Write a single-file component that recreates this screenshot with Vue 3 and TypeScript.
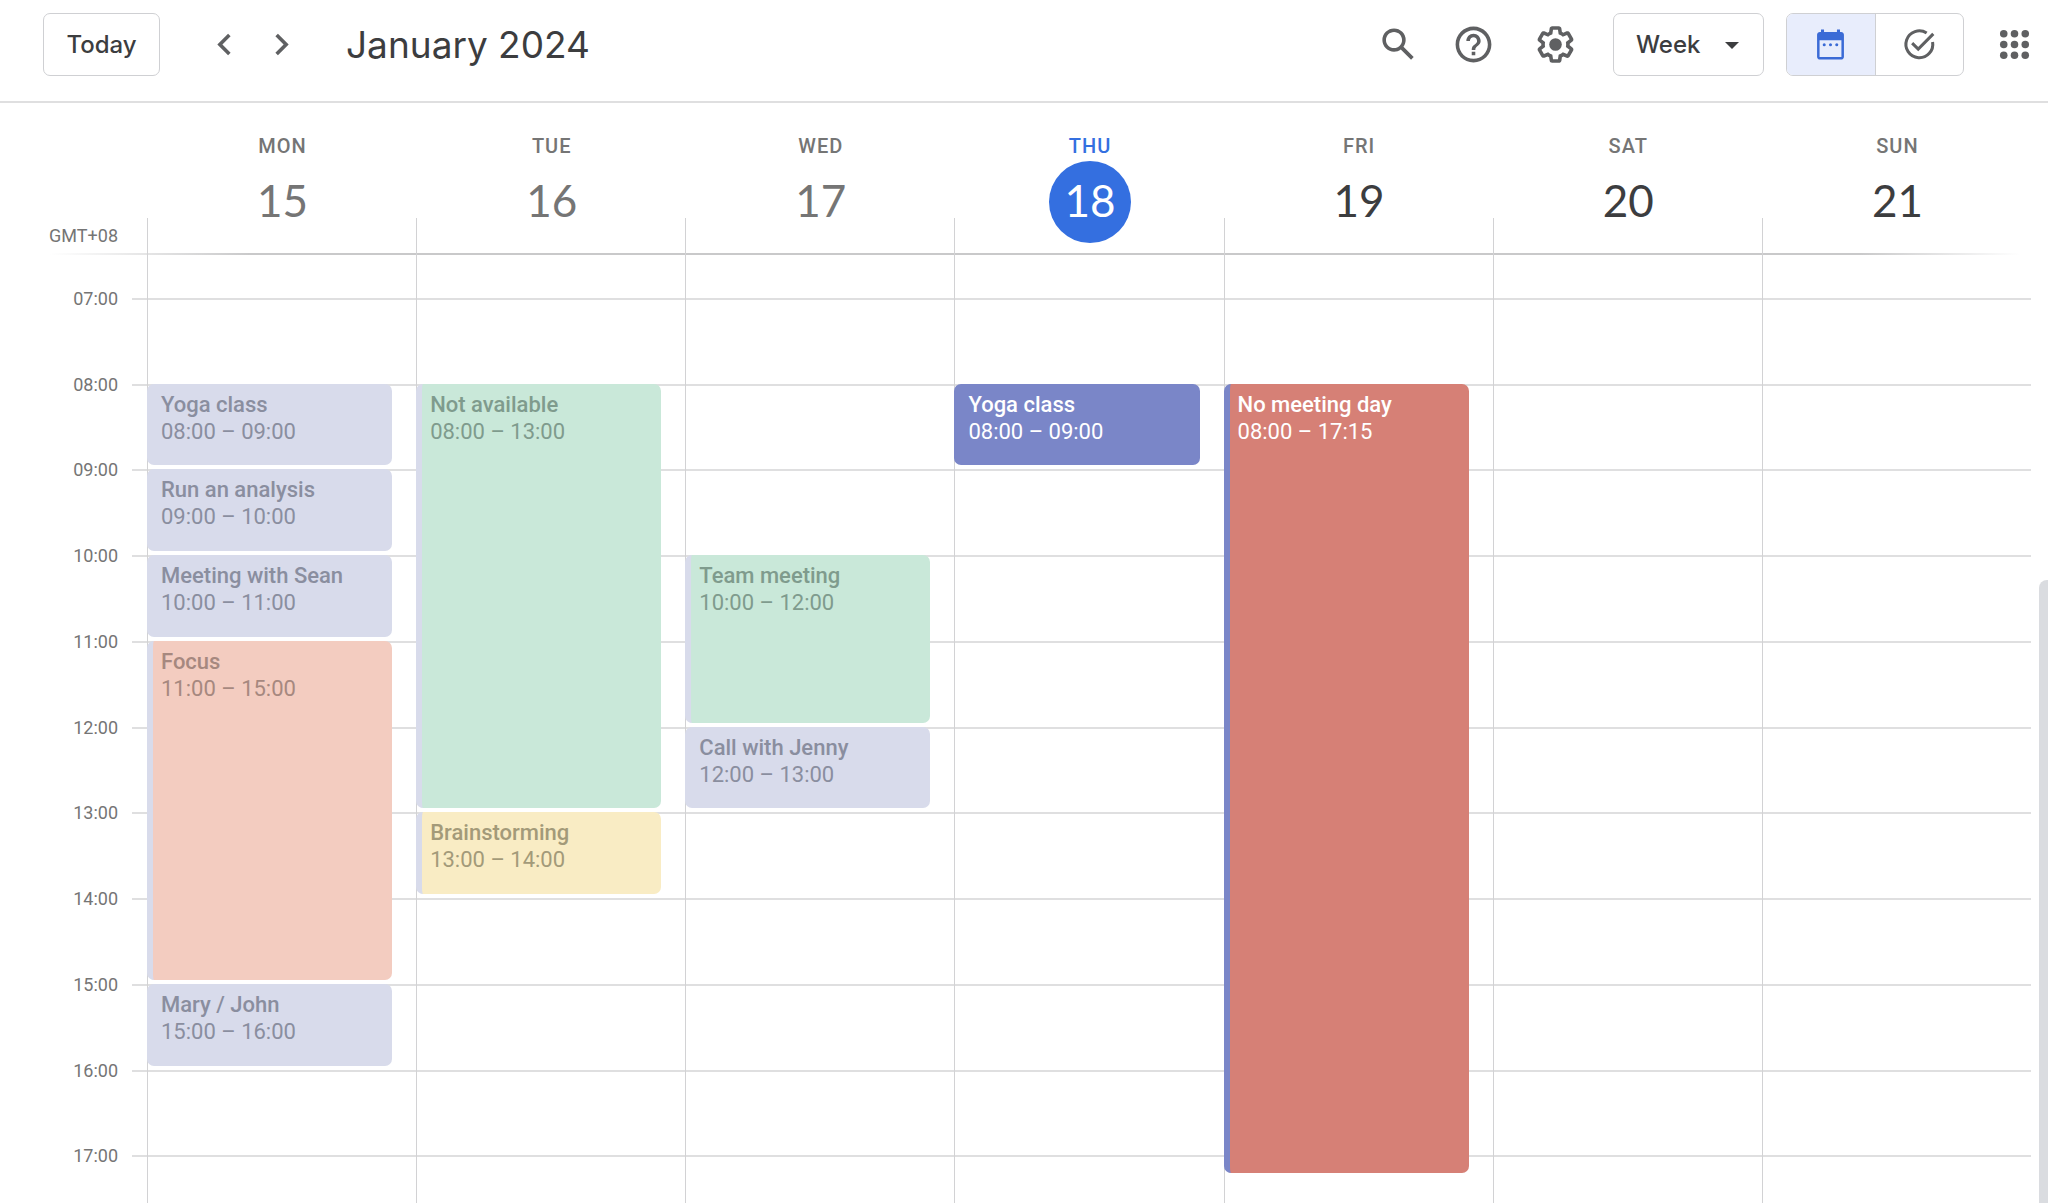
<script setup lang="ts">
interface Day {
  name: string
  date: number
  state: 'past' | 'today' | 'future'
}

interface CalendarEvent {
  title: string
  day: number
  start: string
  end: string
  color: 'indigo' | 'peach' | 'green' | 'yellow' | 'red'
  shared?: boolean
}

const FIRST_HOUR = 6
const HOURS_SHOWN = 12

const days: Day[] = [
  { name: 'Mon', date: 15, state: 'past' },
  { name: 'Tue', date: 16, state: 'past' },
  { name: 'Wed', date: 17, state: 'past' },
  { name: 'Thu', date: 18, state: 'today' },
  { name: 'Fri', date: 19, state: 'future' },
  { name: 'Sat', date: 20, state: 'future' },
  { name: 'Sun', date: 21, state: 'future' },
]

const events: CalendarEvent[] = [
  { title: 'Yoga class', day: 0, start: '08:00', end: '09:00', color: 'indigo' },
  { title: 'Run an analysis', day: 0, start: '09:00', end: '10:00', color: 'indigo' },
  { title: 'Meeting with Sean', day: 0, start: '10:00', end: '11:00', color: 'indigo' },
  { title: 'Focus', day: 0, start: '11:00', end: '15:00', color: 'peach', shared: true },
  { title: 'Mary / John', day: 0, start: '15:00', end: '16:00', color: 'indigo' },
  { title: 'Not available', day: 1, start: '08:00', end: '13:00', color: 'green', shared: true },
  { title: 'Brainstorming', day: 1, start: '13:00', end: '14:00', color: 'yellow', shared: true },
  { title: 'Team meeting', day: 2, start: '10:00', end: '12:00', color: 'green', shared: true },
  { title: 'Call with Jenny', day: 2, start: '12:00', end: '13:00', color: 'indigo' },
  { title: 'Yoga class', day: 3, start: '08:00', end: '09:00', color: 'indigo' },
  { title: 'No meeting day', day: 4, start: '08:00', end: '17:15', color: 'red', shared: true },
]

const hours = Array.from({ length: HOURS_SHOWN - 1 }, (_, i) => {
  const hour = FIRST_HOUR + 1 + i
  return `${String(hour).padStart(2, '0')}:00`
})

// The timeline has one grid row for each quarter of an hour.
function rowOf(time: string): number {
  const [h, m] = time.split(':').map(Number)
  return (h - FIRST_HOUR) * 4 + m / 15 + 1
}

function place(event: CalendarEvent) {
  return {
    gridRow: `${rowOf(event.start)} / ${rowOf(event.end)}`,
    gridColumn: event.day + 3,
  }
}
</script>

<template>
  <div class="calendar">
    <header class="toolbar">
      <button class="outlined today-button" type="button">Today</button>
      <div class="pager">
        <button class="icon-button" type="button" aria-label="Previous week">
          <svg viewBox="0 0 24 24"><path d="M15.41 7.41L14 6l-6 6 6 6 1.41-1.41L10.83 12z" /></svg>
        </button>
        <button class="icon-button" type="button" aria-label="Next week">
          <svg viewBox="0 0 24 24"><path d="M10 6L8.59 7.41 13.17 12l-4.58 4.59L10 18l6-6z" /></svg>
        </button>
      </div>
      <h1 class="period">January 2024</h1>

      <div class="tools">
        <button class="icon-button search" type="button" aria-label="Search">
          <svg viewBox="0 0 24 24">
            <path d="M20.49 19l-5.73-5.73C15.53 12.2 16 10.91 16 9.5A6.5 6.5 0 1 0 9.5 16c1.41 0 2.7-.47 3.77-1.24L19 20.49 20.49 19zM5 9.5C5 7.01 7.01 5 9.5 5S14 7.01 14 9.5 11.99 14 9.5 14 5 11.99 5 9.5z" />
          </svg>
        </button>
        <button class="icon-button help" type="button" aria-label="Support">
          <svg viewBox="0 0 24 24">
            <path d="M11 18h2v-2h-2v2zm1-16C6.48 2 2 6.48 2 12s4.48 10 10 10 10-4.48 10-10S17.52 2 12 2zm0 18c-4.41 0-8-3.59-8-8s3.59-8 8-8 8 3.59 8 8-3.59 8-8 8zm0-14c-2.21 0-4 1.79-4 4h2c0-1.1.9-2 2-2s2 .9 2 2c0 2-3 1.75-3 5h2c0-2.25 3-2.5 3-5 0-2.21-1.79-4-4-4z" />
          </svg>
        </button>
        <button class="icon-button settings" type="button" aria-label="Settings">
          <svg viewBox="0 0 24 24">
            <path d="M13.85 22.25h-3.7c-.74 0-1.36-.54-1.45-1.27l-.27-1.89c-.27-.14-.53-.29-.79-.46l-1.8.72c-.7.26-1.47-.03-1.81-.65L2.2 15.53c-.35-.66-.2-1.44.36-1.88l1.53-1.19c-.01-.15-.02-.3-.02-.46 0-.15.01-.31.02-.46l-1.52-1.19c-.59-.45-.74-1.26-.37-1.88l1.85-3.19c.34-.62 1.11-.9 1.79-.63l1.81.73c.26-.17.52-.32.78-.46l.27-1.91c.09-.7.71-1.25 1.44-1.25h3.7c.74 0 1.36.54 1.45 1.27l.27 1.89c.27.14.53.29.79.46l1.8-.72c.71-.26 1.48.03 1.82.65l1.84 3.18c.36.66.2 1.44-.36 1.88l-1.52 1.19c.01.15.02.3.02.46s-.01.31-.02.46l1.52 1.19c.56.45.72 1.23.37 1.86l-1.86 3.22c-.34.62-1.11.9-1.8.63l-1.8-.72c-.26.17-.52.32-.78.46l-.27 1.91c-.1.68-.72 1.22-1.46 1.22zm-3.23-2h2.76l.37-2.55.53-.22c.44-.18.88-.44 1.34-.78l.45-.34 2.38.96 1.38-2.4-2.03-1.58.07-.56c.03-.26.06-.51.06-.78s-.03-.53-.06-.78l-.07-.56 2.03-1.58-1.39-2.4-2.39.96-.45-.35c-.42-.32-.87-.58-1.33-.77l-.52-.22-.37-2.55h-2.76l-.37 2.55-.53.21c-.44.19-.88.44-1.34.79l-.45.33-2.38-.95-1.39 2.39 2.03 1.58-.07.56a7 7 0 0 0-.06.79c0 .26.02.53.06.78l.07.56-2.03 1.58 1.38 2.4 2.39-.96.45.35c.43.33.86.58 1.33.77l.53.22.38 2.55z" />
            <circle cx="12" cy="12" r="3.5" />
          </svg>
        </button>

        <div class="view-picker">
          <select class="outlined view-select" aria-label="View">
            <option>Day</option>
            <option selected>Week</option>
            <option>Month</option>
          </select>
          <svg class="caret" viewBox="0 0 14 7"><path d="M0 0h14L7 7z" /></svg>
        </div>

        <div class="switch" role="group" aria-label="Calendar or tasks">
          <button class="switch-option selected" type="button" aria-label="Calendar" aria-pressed="true">
            <svg viewBox="0 0 24 24">
              <path fill-rule="evenodd" d="M6.7 3.6h1.7V5h7.2V3.6h1.7V5h.6c.9 0 1.6.7 1.6 1.6v12.2c0 .9-.7 1.6-1.6 1.6H6.1c-.9 0-1.6-.7-1.6-1.6V6.6C4.5 5.7 5.2 5 6.1 5h.6zM5.9 9.6V19h12.2V9.6z" />
              <circle cx="8.5" cy="12.1" r=".85" />
              <circle cx="12" cy="12.1" r=".85" />
              <circle cx="15.5" cy="12.1" r=".85" />
            </svg>
          </button>
          <button class="switch-option" type="button" aria-label="Tasks" aria-pressed="false">
            <svg viewBox="0 0 24 24">
              <g fill="none" stroke="currentColor" stroke-width="1.7">
                <path d="M16 5.6A7.5 7.5 0 1 0 19.3 10.6" />
                <path d="M7.9 11.2l3.4 3.4L19.7 6.1" />
              </g>
            </svg>
          </button>
        </div>

        <button class="icon-button apps" type="button" aria-label="Apps">
          <svg viewBox="0 0 24 24">
            <template v-for="y in [6, 12, 18]" :key="y">
              <circle v-for="x in [6, 12, 18]" :key="x" :cx="x" :cy="y" r="2.1" />
            </template>
          </svg>
        </button>
      </div>
    </header>

    <div class="week-head">
      <div class="zone">GMT+08</div>
      <div v-for="day in days" :key="day.date" class="day-head" :class="day.state">
        <div class="day-name">{{ day.name }}</div>
        <div class="day-date">{{ day.date }}</div>
      </div>
    </div>

    <main class="pane">
      <div class="timeline">
        <template v-for="hour in hours" :key="hour">
          <div class="hour-label" :style="{ gridRow: rowOf(hour) }">{{ hour }}</div>
          <div class="hour-line" :style="{ gridRow: rowOf(hour) }"></div>
        </template>
        <div v-for="(day, i) in days" :key="day.date" class="day-column" :style="{ gridColumn: i + 3 }"></div>
        <article
          v-for="event in events"
          :key="event.day + event.start"
          class="event"
          :class="[event.color, { past: days[event.day].state === 'past', shared: event.shared }]"
          :style="place(event)"
        >
          <div class="event-title">{{ event.title }}</div>
          <div class="event-time">{{ event.start }} – {{ event.end }}</div>
        </article>
      </div>
      <div class="scroll-thumb"></div>
    </main>
  </div>
</template>

<style>
body {
  margin: 0;
  background: #fff;
}
</style>

<style scoped>
.calendar {
  --line: #dfdfe0;
  --column-line: #d2d2d4;
  --outline: #cfd0d3;
  --ink: #3c3d3f;
  --icon: #5f6062;
  --muted: #757575;
  --blue: #346fe0;
  display: flex;
  flex-direction: column;
  height: 100vh;
  overflow: hidden;
  background: #fff;
  color: var(--ink);
  font-family: Roboto, "Liberation Sans", sans-serif;
}

.calendar *,
.calendar *::before {
  box-sizing: border-box;
}

button,
select {
  margin: 0;
  padding: 0;
  border: 0;
  background: none;
  color: inherit;
  font: inherit;
}

svg {
  display: block;
  fill: currentColor;
}

.toolbar {
  display: flex;
  flex: none;
  align-items: center;
  height: 103px;
  padding: 0 12px 12px 43px;
  border-bottom: 2px solid var(--line);
}

.outlined {
  height: 63px;
  border: 1px solid var(--outline);
  border-radius: 7px;
  font-family: Inter, "Open Sans", sans-serif;
  font-size: 24px;
  font-weight: 500;
}

.today-button {
  width: 117px;
}

.icon-button {
  width: 43px;
  height: 43px;
  color: var(--icon);
}

.icon-button svg {
  width: 43px;
  height: 43px;
}

.pager {
  display: flex;
  gap: 14px;
  margin-left: 43px;
}

.period {
  margin: 0 0 0 43px;
  font-family: Inter, "Open Sans", sans-serif;
  font-size: 37px;
  font-weight: 400;
  line-height: 48px;
}

.tools {
  display: flex;
  align-items: center;
  margin-left: auto;
}

.help {
  margin-left: 32px;
}

.settings {
  margin-left: 39px;
}

.view-picker {
  position: relative;
  margin-left: 36px;
}

.view-select {
  width: 151px;
  padding-left: 22px;
  appearance: none;
}

.caret {
  position: absolute;
  top: 29px;
  right: 25px;
  width: 14px;
  height: 7px;
  pointer-events: none;
}

.switch {
  display: flex;
  width: 178px;
  height: 63px;
  margin-left: 22px;
  overflow: hidden;
  border: 1px solid var(--outline);
  border-radius: 7px;
}

.switch-option {
  display: flex;
  flex: 1;
  align-items: center;
  justify-content: center;
  color: var(--icon);
}

.switch-option + .switch-option {
  border-left: 1px solid var(--outline);
}

.switch-option svg {
  width: 43px;
  height: 43px;
}

.switch-option.selected {
  background: #e8edfc;
  color: #3b6bd6;
}

.apps {
  margin-left: 29px;
}

.week-head {
  position: relative;
  display: grid;
  flex: none;
  grid-template-columns: 147px repeat(7, minmax(0, 1fr));
  padding: 31px 17px 12px 0;
}

.week-head::before {
  content: "";
  position: absolute;
  right: 28px;
  bottom: 0;
  left: 50px;
  height: 2px;
  background: linear-gradient(90deg, transparent, #c9c9ca 200px, #c9c9ca calc(100% - 160px), transparent);
}

.zone {
  align-self: end;
  margin-bottom: -3px;
  padding-right: 29px;
  color: var(--muted);
  font-size: 18px;
  line-height: 20px;
  text-align: right;
}

.day-head {
  position: relative;
  display: flex;
  flex-direction: column;
  gap: 3px;
  align-items: center;
  padding-left: 2px;
}

.day-head::before {
  content: "";
  position: absolute;
  bottom: -12px;
  left: 0;
  width: 1px;
  height: 37px;
  background: var(--column-line);
}

.day-name {
  color: var(--muted);
  font-size: 20px;
  font-weight: 500;
  letter-spacing: 1px;
  line-height: 24px;
  text-transform: uppercase;
}

.day-date {
  width: 82px;
  height: 82px;
  border-radius: 50%;
  font-family: Lato, "Open Sans", sans-serif;
  font-size: 44px;
  line-height: 78px;
  text-align: center;
}

.past .day-date {
  color: var(--muted);
}

.today .day-name {
  color: var(--blue);
}

.today .day-date {
  background: var(--blue);
  color: #fff;
}

.pane {
  position: relative;
  flex: 1;
  min-height: 0;
  overflow: hidden;
}

.timeline {
  display: grid;
  grid-template-rows: repeat(48, minmax(0, 1fr));
  grid-template-columns: 132px 15px repeat(7, minmax(0, 1fr));
  height: 1029px;
  margin: -43px 17px 0 0;
}

.hour-label {
  grid-column: 1;
  margin-top: -9px;
  padding-right: 14px;
  color: var(--muted);
  font-size: 18px;
  line-height: 20px;
  text-align: right;
}

.hour-line {
  grid-column: 2 / -1;
  border-top: 2px solid var(--line);
}

.day-column {
  grid-row: 1 / -1;
  border-left: 1px solid var(--column-line);
}

.event {
  min-width: 0;
  margin: 0 24px 4px 0;
  padding: 7px 0 0 14px;
  overflow: hidden;
  border-radius: 7px;
  color: #fff;
  font-size: 22px;
  line-height: 27px;
  white-space: nowrap;
}

.event.shared {
  padding-left: 8px;
  border-left: 6px solid #7a86c8;
}

.event-title {
  font-weight: 500;
}

.indigo {
  background: #7a86c8;
}

.red {
  background: #d68076;
}

.past.shared {
  border-left-color: #d8dbeb;
}

.past.indigo {
  background: #d8dbeb;
  color: #8a8e9f;
}

.past.peach {
  background: #f3ccc0;
  color: #a6887f;
}

.past.green {
  background: #c9e8d9;
  color: #7f9b8d;
}

.past.yellow {
  background: #f9ecc4;
  color: #a39a79;
}

.scroll-thumb {
  position: absolute;
  top: 325px;
  right: 0;
  bottom: 0;
  width: 9px;
  border-radius: 8px 0 0 0;
  background: #dadce0;
}
</style>
